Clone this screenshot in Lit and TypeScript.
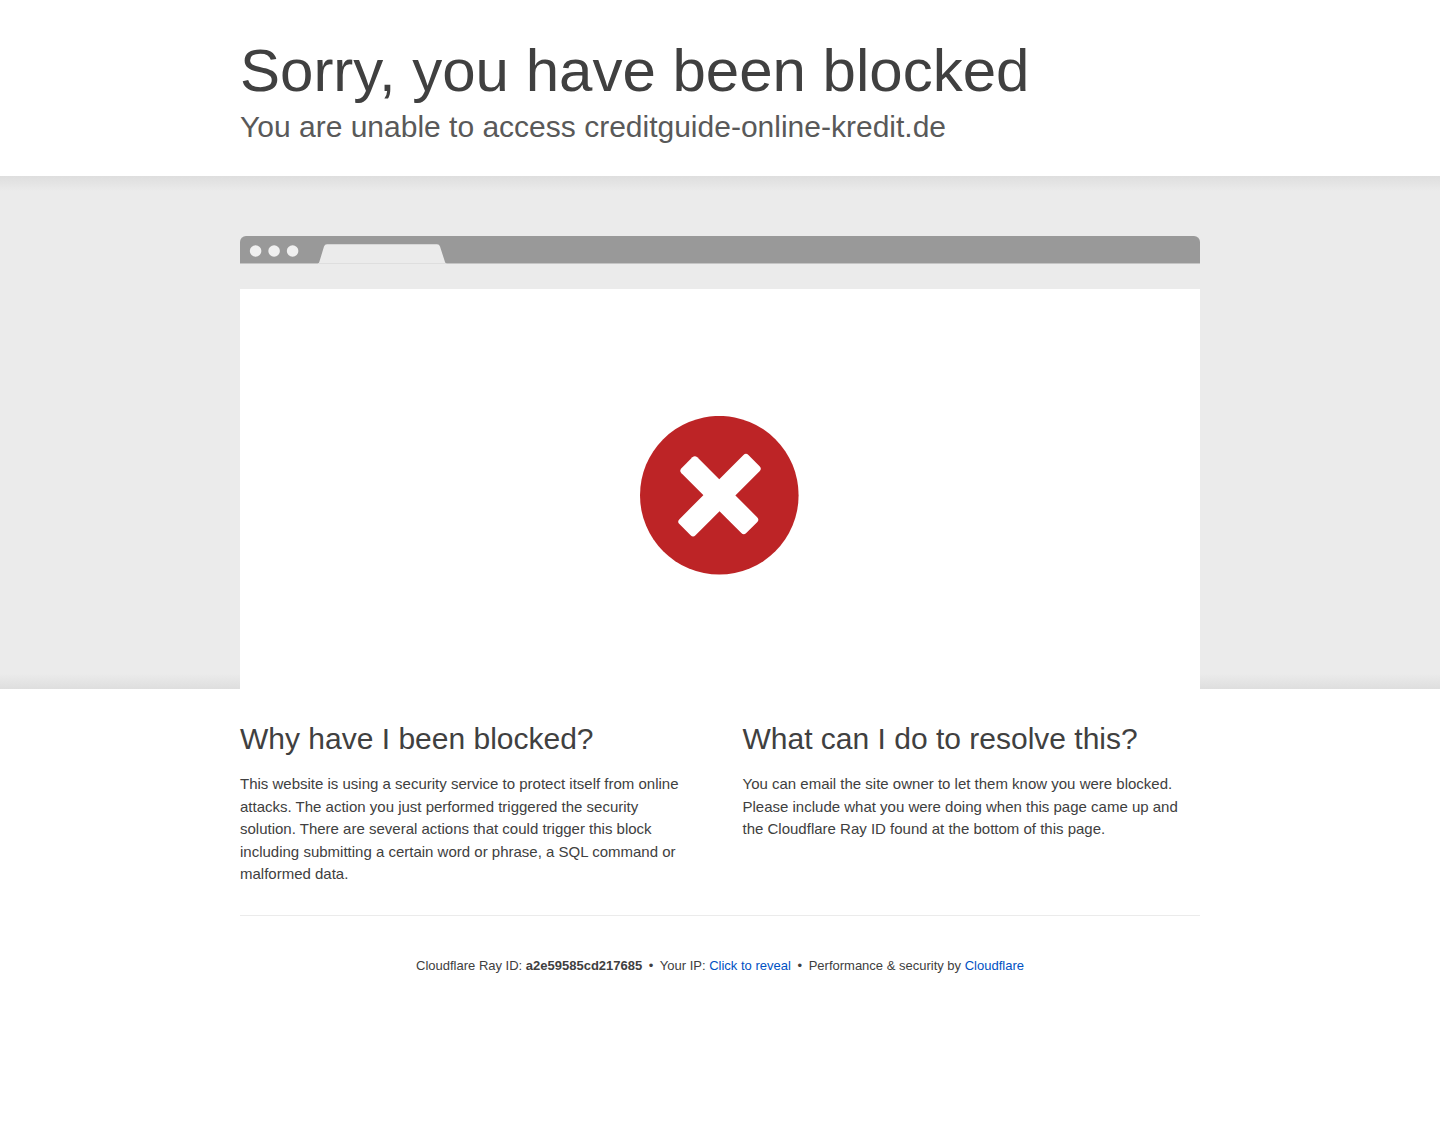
import { LitElement, html, css } from "lit";
import { customElement, property } from "lit/decorators.js";

/** Illustration of a browser window whose page failed to load. */
@customElement("browser-window")
class BrowserWindow extends LitElement {
  static styles = css`
    :host {
      display: block;
    }
    .bar {
      display: flex;
      height: 27px;
      background: #999;
      border-bottom: 1px solid #c4c4c4;
      border-radius: 6px 6px 0 0;
    }
    .controls {
      flex: none;
      width: 210px;
      height: 28px;
    }
    .toolbar {
      height: 25px;
      background: #ebebeb;
    }
    .page {
      display: flex;
      justify-content: center;
      box-sizing: border-box;
      min-height: 400px;
      padding-top: 127px;
      background: #fff;
    }
    .error {
      width: 160px;
      height: 160px;
    }
  `;

  render() {
    return html`
      <div class="bar">
        <svg class="controls" viewBox="0 0 210 28" aria-hidden="true">
          <g fill="#f0f0f0">
            <circle cx="15.6" cy="15" r="5.8" />
            <circle cx="34.1" cy="15" r="5.8" />
            <circle cx="52.6" cy="15" r="5.8" />
          </g>
          <path
            fill="#ebebeb"
            d="M77.6 28 Q78.8 27.4 79.3 26 L84 10.6 Q84.8 8.3 87 8.3 H197 Q199.3 8.3 200 10.6 L205 26 Q205.5 27.4 206.6 28 Z"
          />
          <path fill="#dedede" d="M78 27 H206.2 V28 H78 Z" />
        </svg>
      </div>
      <div class="toolbar"></div>
      <div class="page">
        <svg class="error" viewBox="0 0 160 160" role="img" aria-label="Error">
          <circle cx="79.3" cy="79.2" r="79.3" fill="#bd2426" />
          <g fill="#fff">
            <rect x="-48.8" y="-11.4" width="97.6" height="22.8" rx="3.5" transform="translate(79.5 79.2) rotate(-45)" />
            <rect x="-45.8" y="-11.2" width="91.6" height="22.4" rx="3.5" transform="translate(79.3 79.2) rotate(45)" />
          </g>
        </svg>
      </div>
    `;
  }
}

@customElement("app-root")
class AppRoot extends LitElement {
  @property() host = "creditguide-online-kredit.de";
  @property() rayId = "a2e59585cd217685";

  static styles = css`
    :host {
      display: block;
      font-family: "Liberation Sans", Arial, sans-serif;
      font-size: 15px;
      line-height: 1.5;
      color: #404040;
    }
    .wrapper {
      box-sizing: border-box;
      width: 66.6667%;
      min-width: min(100%, 720px);
      margin: 0 auto;
    }
    .header {
      padding: 35px 0 30px;
    }
    h1,
    h2,
    p {
      margin: 0;
      font-weight: 400;
    }
    h1 {
      font-size: 60px;
      line-height: 72px;
    }
    h2 {
      font-size: 30px;
      line-height: 39px;
    }
    .subtitle {
      color: #595959;
    }
    .highlight {
      padding-top: 60px;
      background: linear-gradient(#dedede, #ebebeb 3%, #ebebeb 97%, #dedede);
    }
    .columns {
      display: grid;
      grid-template-columns: repeat(auto-fit, minmax(320px, 1fr));
      gap: 45px;
      padding: 30px 0 29px;
    }
    .columns p {
      margin-top: 15px;
    }
    .footer {
      padding: 40px 0;
      border-top: 1px solid #ebebeb;
      font-size: 13px;
      text-align: center;
    }
    .separator {
      margin: 0 3px;
    }
    a,
    button {
      color: #0051c3;
      text-decoration: none;
    }
    button {
      padding: 0;
      border: 0;
      background: none;
      font: inherit;
      cursor: pointer;
    }
    a:hover,
    button:hover {
      color: #ee730a;
    }
  `;

  render() {
    return html`
      <header class="wrapper header">
        <h1>Sorry, you have been blocked</h1>
        <h2 class="subtitle">You are unable to access ${this.host}</h2>
      </header>
      <section class="highlight">
        <browser-window class="wrapper"></browser-window>
      </section>
      <main class="wrapper columns">
        <section>
          <h2>Why have I been blocked?</h2>
          <p>
            This website is using a security service to protect itself from online attacks. The action you just
            performed triggered the security solution. There are several actions that could trigger this block
            including submitting a certain word or phrase, a SQL command or malformed data.
          </p>
        </section>
        <section>
          <h2>What can I do to resolve this?</h2>
          <p>
            You can email the site owner to let them know you were blocked. Please include what you were doing when
            this page came up and the Cloudflare Ray ID found at the bottom of this page.
          </p>
        </section>
      </main>
      <footer class="wrapper footer">
        <span>Cloudflare Ray ID: <strong>${this.rayId}</strong></span>
        <span class="separator">•</span>
        <span>Your IP: <button type="button">Click to reveal</button></span>
        <span class="separator">•</span>
        <span>Performance &amp; security by <a href="https://www.cloudflare.com/5xx-error-landing">Cloudflare</a></span>
      </footer>
    `;
  }
}
